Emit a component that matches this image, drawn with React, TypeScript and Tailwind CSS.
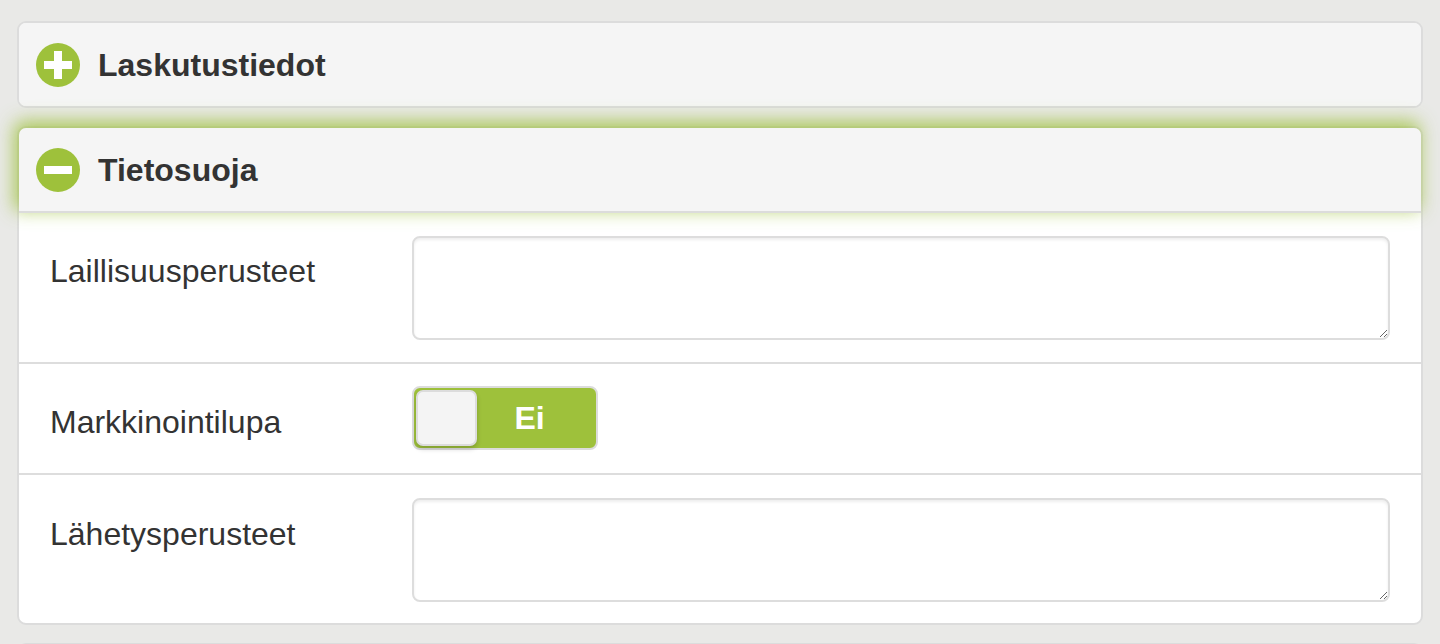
import React from "react";

const font = { fontFamily: '"Liberation Sans", Arial, sans-serif' };

function CircleIcon({ open }: { open: boolean }) {
  return (
    <div className="relative w-[44px] h-[44px] rounded-full bg-[#9ec13b] shrink-0">
      <div className="absolute left-[8px] top-[18px] w-[28px] h-[8px] bg-white" />
      {!open && <div className="absolute left-[18px] top-[8px] w-[8px] h-[28px] bg-white" />}
    </div>
  );
}

function Header({ title, open }: { title: string; open: boolean }) {
  return (
    <div
      className={
        "flex items-center gap-[18px] pl-[17px] bg-[#f5f5f5] rounded-t-[7px] " +
        (open
          ? "h-[85px] border-b-2 border-[#dcdcdc] shadow-[-3px_-5px_18px_2px_rgba(158,193,59,0.8)]"
          : "h-[83px] rounded-b-[7px]")
      }
    >
      <CircleIcon open={open} />
      <span className="text-[32px] font-bold text-[#333]">{title}</span>
    </div>
  );
}

function Area() {
  return (
    <textarea className="block w-[978px] h-[104px] border-2 border-[#dddddd] rounded-[8px] bg-white shadow-[inset_0_2px_3px_rgba(0,0,0,0.07)] outline-none" />
  );
}

export default function App() {
  return (
    <div className="min-h-screen bg-[#e9e9e7] px-[17px] pt-[21px] flex flex-col gap-[18px]" style={font}>
      <div className="border-2 border-[#dcdcdc] rounded-[9px] bg-[#f5f5f5]">
        <Header title="Laskutustiedot" open={false} />
      </div>

      <div className="border-2 border-[#dcdcdc] rounded-[9px] bg-white">
        <Header title="Tietosuoja" open={true} />

        <div className="flex pt-[23px] pb-[22px] border-b-2 border-[#dddddd]">
          <div className="w-[393px] pl-[31px] pt-[16px] text-[32px] text-[#333] leading-[38px]">Laillisuusperusteet</div>
          <Area />
        </div>

        <div className="flex items-center h-[111px] border-b-2 border-[#dddddd]">
          <div className="w-[393px] pl-[31px] text-[32px] text-[#333] leading-[38px] pt-[6px]">Markkinointilupa</div>
          <div className="flex w-[186px] h-[64px] border-2 border-[#dcdcdc] rounded-[8px] bg-[#9ec13b] p-[2px] mt-[-2px]">
            <div className="w-[61px] h-full rounded-[7px] bg-[#f4f4f4] border-2 border-[#dcdcdc] shadow-[0_3px_5px_rgba(0,0,0,0.18)]" />
            <div className="flex-1 flex items-center justify-center text-white font-bold text-[32px] pr-[12px]">Ei</div>
          </div>
        </div>

        <div className="flex pt-[23px] pb-[21px]">
          <div className="w-[393px] pl-[31px] pt-[17px] text-[32px] text-[#333] leading-[38px]">Lähetysperusteet</div>
          <Area />
        </div>
      </div>

      <div className="border-2 border-[#dcdcdc] rounded-[9px] bg-[#f5f5f5] h-[87px]" />
    </div>
  );
}
